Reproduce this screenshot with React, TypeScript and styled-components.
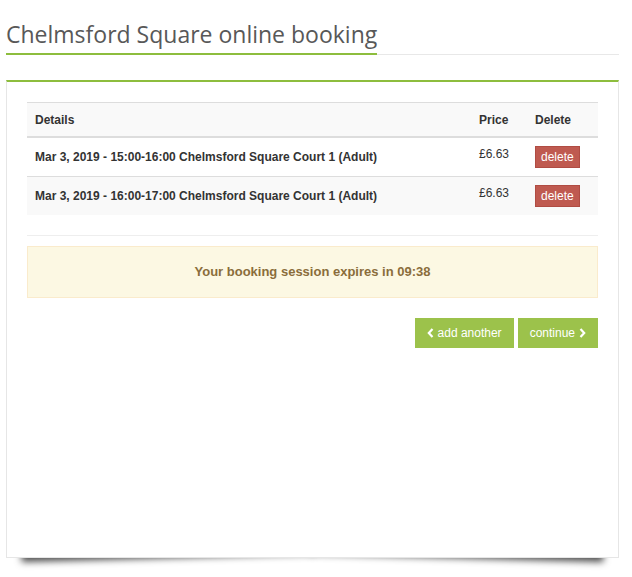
import React from "react";
import styled, { createGlobalStyle } from "styled-components";

const Global = createGlobalStyle`
  html { background: #ffffff; }
  html, body { margin: 0; padding: 0; }
  body { background: transparent; font-family: "Liberation Sans", Arial, sans-serif; font-size: 12px; color: #333; }
`;

const Page = styled.div`
  position: relative;
  z-index: 0;
  width: 613px;
  margin-left: 6px;
  padding-top: 19px;
  padding-bottom: 20px;
`;

const TitleBar = styled.div`
  border-bottom: 1px solid #e8e8e8;
`;

const Title = styled.h1`
  display: inline-block;
  margin: 0 0 -1px 0;
  padding-bottom: 3px;
  font-family: "Open Sans", sans-serif;
  font-weight: 400;
  font-size: 23px;
  line-height: 31px;
  color: #585858;
  border-bottom: 2px solid #8dbd3d;
`;

const Panel = styled.div`
  position: relative;
  margin-top: 25px;
  height: 435px;
  background: #fff;
  border: 1px solid #e6e6e6;
  border-top: 2px solid #8dbd3d;
  padding: 20px;
  box-sizing: content-box;
  width: 571px;

  &::before, &::after {
    content: "";
    position: absolute;
    z-index: -1;
    bottom: 12px;
    width: 48%;
    height: 20px;
    background: #888;
    box-shadow: 0 13px 7px rgba(0, 0, 0, 0.7);
  }
  &::before {
    left: 14px;
    transform: rotate(-1.6deg);
  }
  &::after {
    right: 14px;
    transform: rotate(1.6deg);
  }
`;

const Table = styled.table`
  width: 571px;
  border-collapse: collapse;
  border-spacing: 0;
  font-size: 12px;
  line-height: 17px;
  color: #333;
`;

const HeadCell = styled.th<{ $w?: number }>`
  text-align: left;
  font-weight: bold;
  padding: 9px 8px 7px;
  background: #f9f9f9;
  border-top: 1px solid #ddd;
  border-bottom: 2px solid #ddd;
  ${(p) => (p.$w ? `width: ${p.$w}px;` : "")}
  box-sizing: border-box;
`;

const Row = styled.tr<{ $alt?: boolean }>`
  background: ${(p) => (p.$alt ? "#f9f9f9" : "#ffffff")};
`;

const Cell = styled.td<{ $bold?: boolean; $middle?: boolean }>`
  padding: 8px;
  border-top: 1px solid #ddd;
  vertical-align: ${(p) => (p.$middle ? "middle" : "top")};
  font-weight: ${(p) => (p.$bold ? "bold" : "normal")};
`;

const DeleteButton = styled.button`
  height: 22px;
  padding: 0 5px;
  border: 1px solid #b04c43;
  background: #bf5a50;
  color: #fff;
  font-family: "Liberation Sans", Arial, sans-serif;
  font-size: 12px;
  line-height: 20px;
  border-radius: 0;
  cursor: pointer;
  display: block;
`;

const Divider = styled.hr`
  border: 0;
  border-top: 1px solid #eee;
  margin: 20px 0 10px;
`;

const Alert = styled.div`
  background: #fcf8e3;
  border: 1px solid #faebcc;
  color: #8a6d3b;
  font-weight: bold;
  text-align: center;
  padding: 15px;
  line-height: 20px;
  font-size: 13px;
`;

const Actions = styled.div`
  display: flex;
  justify-content: flex-end;
  gap: 4px;
  margin-top: 20px;
`;

const ActionButton = styled.button`
  display: inline-flex;
  align-items: center;
  gap: 4px;
  height: 30px;
  padding: 0 12px;
  border: 0;
  background: #9cc24b;
  color: #fff;
  font-family: "Liberation Sans", Arial, sans-serif;
  font-size: 12px;
  cursor: pointer;
`;

const Chevron = ({ dir }: { dir: "left" | "right" }) => (
  <svg width="7" height="10" viewBox="0 0 7 10">
    <path
      d={dir === "left" ? "M5.5 1 L1.8 5 L5.5 9" : "M1.5 1 L5.2 5 L1.5 9"}
      fill="none"
      stroke="#fff"
      strokeWidth="2.2"
    />
  </svg>
);

const rows = [
  { text: "Mar 3, 2019 - 15:00-16:00 Chelmsford Square Court 1 (Adult)", price: "£6.63" },
  { text: "Mar 3, 2019 - 16:00-17:00 Chelmsford Square Court 1 (Adult)", price: "£6.63" },
];

export default function App() {
  return (
    <>
      <Global />
      <Page>
        <TitleBar>
          <Title>Chelmsford Square online booking</Title>
        </TitleBar>
        <Panel>
          <Table>
            <thead>
              <tr>
                <HeadCell>Details</HeadCell>
                <HeadCell $w={56}>Price</HeadCell>
                <HeadCell $w={71}>Delete</HeadCell>
              </tr>
            </thead>
            <tbody>
              {rows.map((r, i) => (
                <Row key={i} $alt={i % 2 === 1}>
                  <Cell $bold $middle>{r.text}</Cell>
                  <Cell>{r.price}</Cell>
                  <Cell>
                    <DeleteButton>delete</DeleteButton>
                  </Cell>
                </Row>
              ))}
            </tbody>
          </Table>
          <Divider />
          <Alert>Your booking session expires in 09:38</Alert>
          <Actions>
            <ActionButton>
              <Chevron dir="left" />
              add another
            </ActionButton>
            <ActionButton>
              continue
              <Chevron dir="right" />
            </ActionButton>
          </Actions>
        </Panel>
      </Page>
    </>
  );
}
